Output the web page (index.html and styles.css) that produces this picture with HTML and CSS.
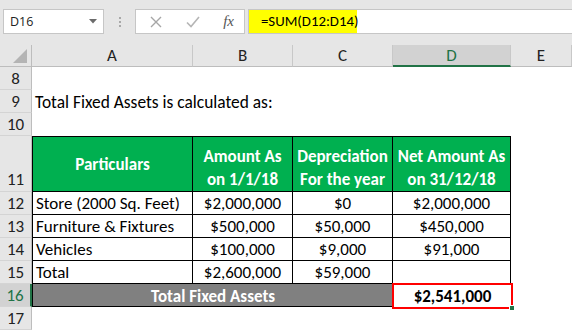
FILE: index.html
```html
<!DOCTYPE html>
<html lang="en">
<head>
  <meta charset="UTF-8" />
  <title>Total Fixed Assets</title>
  <link rel="stylesheet" href="styles.css">
</head>
<body>
  <div class="app">
    <!-- formula bar -->
    <div class="toolbar">
      <div class="namebox">
        <span>D16</span>
        <svg width="8" height="5" viewBox="0 0 8 5"><path d="M0 0H8L4 4.5Z" fill="#6b6b6b"/></svg>
      </div>
      <div class="grip"><i></i><i></i><i></i></div>
      <div class="fxbox">
        <svg width="12" height="12" viewBox="0 0 12 12"><path d="M1 1L11 11M11 1L1 11" stroke="#a6a6a6" stroke-width="1.4" fill="none"/></svg>
        <svg width="14" height="12" viewBox="0 0 14 12"><path d="M1 6.5L5 10.5L13 1" stroke="#b5b5b5" stroke-width="1.6" fill="none"/></svg>
        <span class="fx">fx</span>
      </div>
      <div class="formula"><span class="hl">=SUM(D12:D14)</span></div>
    </div>

    <!-- sheet -->
    <div class="sheet">
      <div class="corner"><span class="tri"></span></div>
      <div class="ch">A</div>
      <div class="ch">B</div>
      <div class="ch">C</div>
      <div class="ch sel">D</div>
      <div class="ch">E</div>

      <div class="rh">8</div>
      <div class="c span5"></div>

      <div class="rh">9</div>
      <div class="c span5 txt">Total Fixed Assets is calculated as:</div>

      <div class="rh">10</div>
      <div class="c span5"></div>

      <div class="rh low">11</div>
      <div class="t th first mid">Particulars</div>
      <div class="t th">Amount As<br>on 1/1/18</div>
      <div class="t th">Depreciation<br>For the year</div>
      <div class="t th">Net Amount As<br>on 31/12/18</div>
      <div class="c"></div>

      <div class="rh">12</div>
      <div class="t first">Store (2000 Sq. Feet)</div>
      <div class="t num">$2,000,000</div>
      <div class="t num">$0</div>
      <div class="t num">$2,000,000</div>
      <div class="c"></div>

      <div class="rh">13</div>
      <div class="t first">Furniture &amp; Fixtures</div>
      <div class="t num">$500,000</div>
      <div class="t num">$50,000</div>
      <div class="t num">$450,000</div>
      <div class="c"></div>

      <div class="rh">14</div>
      <div class="t first">Vehicles</div>
      <div class="t num">$100,000</div>
      <div class="t num">$9,000</div>
      <div class="t num">$91,000</div>
      <div class="c"></div>

      <div class="rh">15</div>
      <div class="t first">Total</div>
      <div class="t num">$2,600,000</div>
      <div class="t num">$59,000</div>
      <div class="t num"></div>
      <div class="c"></div>

      <div class="rh sel">16</div>
      <div class="tot">Total Fixed Assets</div>
      <div class="ans">$2,541,000<span class="handle"></span></div>
      <div class="c"></div>

      <div class="rh">17</div>
      <div class="c span5"></div>
    </div>
  </div>
</body>
</html>
```

FILE: styles.css
```css
body {
  margin: 0;
  font-family: Carlito, Calibri, Lato, sans-serif;
  color: #000;
}

.app {
  width: 572px;
  height: 330px;
  overflow: hidden;
  background: #fff;
}

/* formula bar */
.toolbar {
  height: 45px;
  box-sizing: border-box;
  padding-top: 9px;
  display: flex;
  align-items: flex-start;
  background: #e6e6e6;
}

.namebox {
  margin-left: 3px;
  width: 101px;
  height: 25px;
  box-sizing: border-box;
  padding: 0 6px 0 6px;
  display: flex;
  align-items: center;
  justify-content: space-between;
  background: #fff;
  border: 1px solid #c6c6c6;
  font-family: "Open Sans", sans-serif;
  font-size: 12.5px;
  color: #222;
}

.grip {
  width: 31px;
  height: 25px;
  display: flex;
  flex-direction: column;
  align-items: center;
  justify-content: center;
  gap: 2px;
}

.grip i {
  width: 2px;
  height: 2px;
  background: #a8a8a8;
}

.fxbox {
  width: 110px;
  height: 25px;
  box-sizing: border-box;
  padding: 0 10px 0 14px;
  display: flex;
  align-items: center;
  justify-content: space-between;
  background: #fff;
  border: 1px solid #c6c6c6;
}

.fx {
  font-family: "Liberation Serif", serif;
  font-style: italic;
  font-size: 15px;
  color: #555;
}

.formula {
  margin-left: 3px;
  flex: 1;
  height: 25px;
  background: #fff;
  border: 1px solid #c6c6c6;
  border-right: none;
  box-sizing: border-box;
}

.hl {
  display: inline-block;
  width: 108px;
  height: 100%;
  box-sizing: border-box;
  padding-left: 12px;
  line-height: 23px;
  background: #ffff00;
  font-size: 14.8px;
}

/* worksheet */
.sheet {
  display: grid;
  grid-template-columns: 32px 161px 100px 100px 118px 61px;
  grid-template-rows: 22px 23px 23px 23px 56px 23px 23px 23px 23px 23px 23px;
  font-size: 17px;
}

.corner {
  position: relative;
  background: #e6e6e6;
  border-right: 1px solid #bdbdbd;
  border-bottom: 1px solid #bdbdbd;
}

.tri {
  position: absolute;
  left: 13px;
  top: 4px;
  width: 14px;
  height: 14px;
  background: #b4b4b4;
  clip-path: polygon(100% 0, 100% 100%, 0 100%);
}

.ch {
  display: flex;
  align-items: center;
  justify-content: center;
  background: #e6e6e6;
  border-right: 1px solid #c8c8c8;
  border-bottom: 1px solid #bdbdbd;
  color: #222;
}

.ch.sel {
  background: #d2d2d2;
  color: #217346;
  border-bottom: 2px solid #217346;
}

.rh {
  display: flex;
  align-items: center;
  justify-content: center;
  padding-top: 1px;
  box-sizing: border-box;
  background: #e6e6e6;
  border-right: 1px solid #bdbdbd;
  border-bottom: 1px solid #d4d4d4;
  color: #222;
}

.rh.low {
  align-items: flex-end;
  padding-bottom: 1px;
}

.rh.sel {
  background: #d2d2d2;
  color: #217346;
  border-right: 2px solid #217346;
}

.c {
  background: #fff;
}

.span5 {
  grid-column: span 5;
}

.txt {
  display: flex;
  align-items: center;
  padding-left: 3px;
  padding-top: 1px;
  font-size: 17.4px;
}

.t {
  display: flex;
  align-items: center;
  padding: 1px 3px 0;
  border-right: 1px solid #000;
  border-bottom: 1px solid #000;
  white-space: nowrap;
}

.t.first {
  border-left: 1px solid #000;
}

.t.num {
  justify-content: center;
}

.th {
  align-items: flex-end;
  justify-content: center;
  text-align: center;
  line-height: 23px;
  padding-bottom: 0;
  border-top: 1px solid #000;
  background: #00b050;
  color: #fff;
  font-weight: bold;
}

.th.mid {
  align-items: center;
}

.tot {
  grid-column: span 3;
  display: flex;
  align-items: center;
  justify-content: center;
  padding-top: 2px;
  background: #808080;
  border-left: 1px solid #000;
  border-bottom: 1px solid #000;
  color: #fff;
  font-weight: bold;
}

.ans {
  position: relative;
  margin: -1px -2px -2px -1px;
  display: flex;
  align-items: center;
  justify-content: center;
  border: 2px solid #ff0000;
  font-weight: bold;
}

.handle {
  position: absolute;
  right: -4px;
  bottom: -4px;
  width: 4px;
  height: 4px;
  background: #217346;
  border: 1px solid #fff;
}
```
